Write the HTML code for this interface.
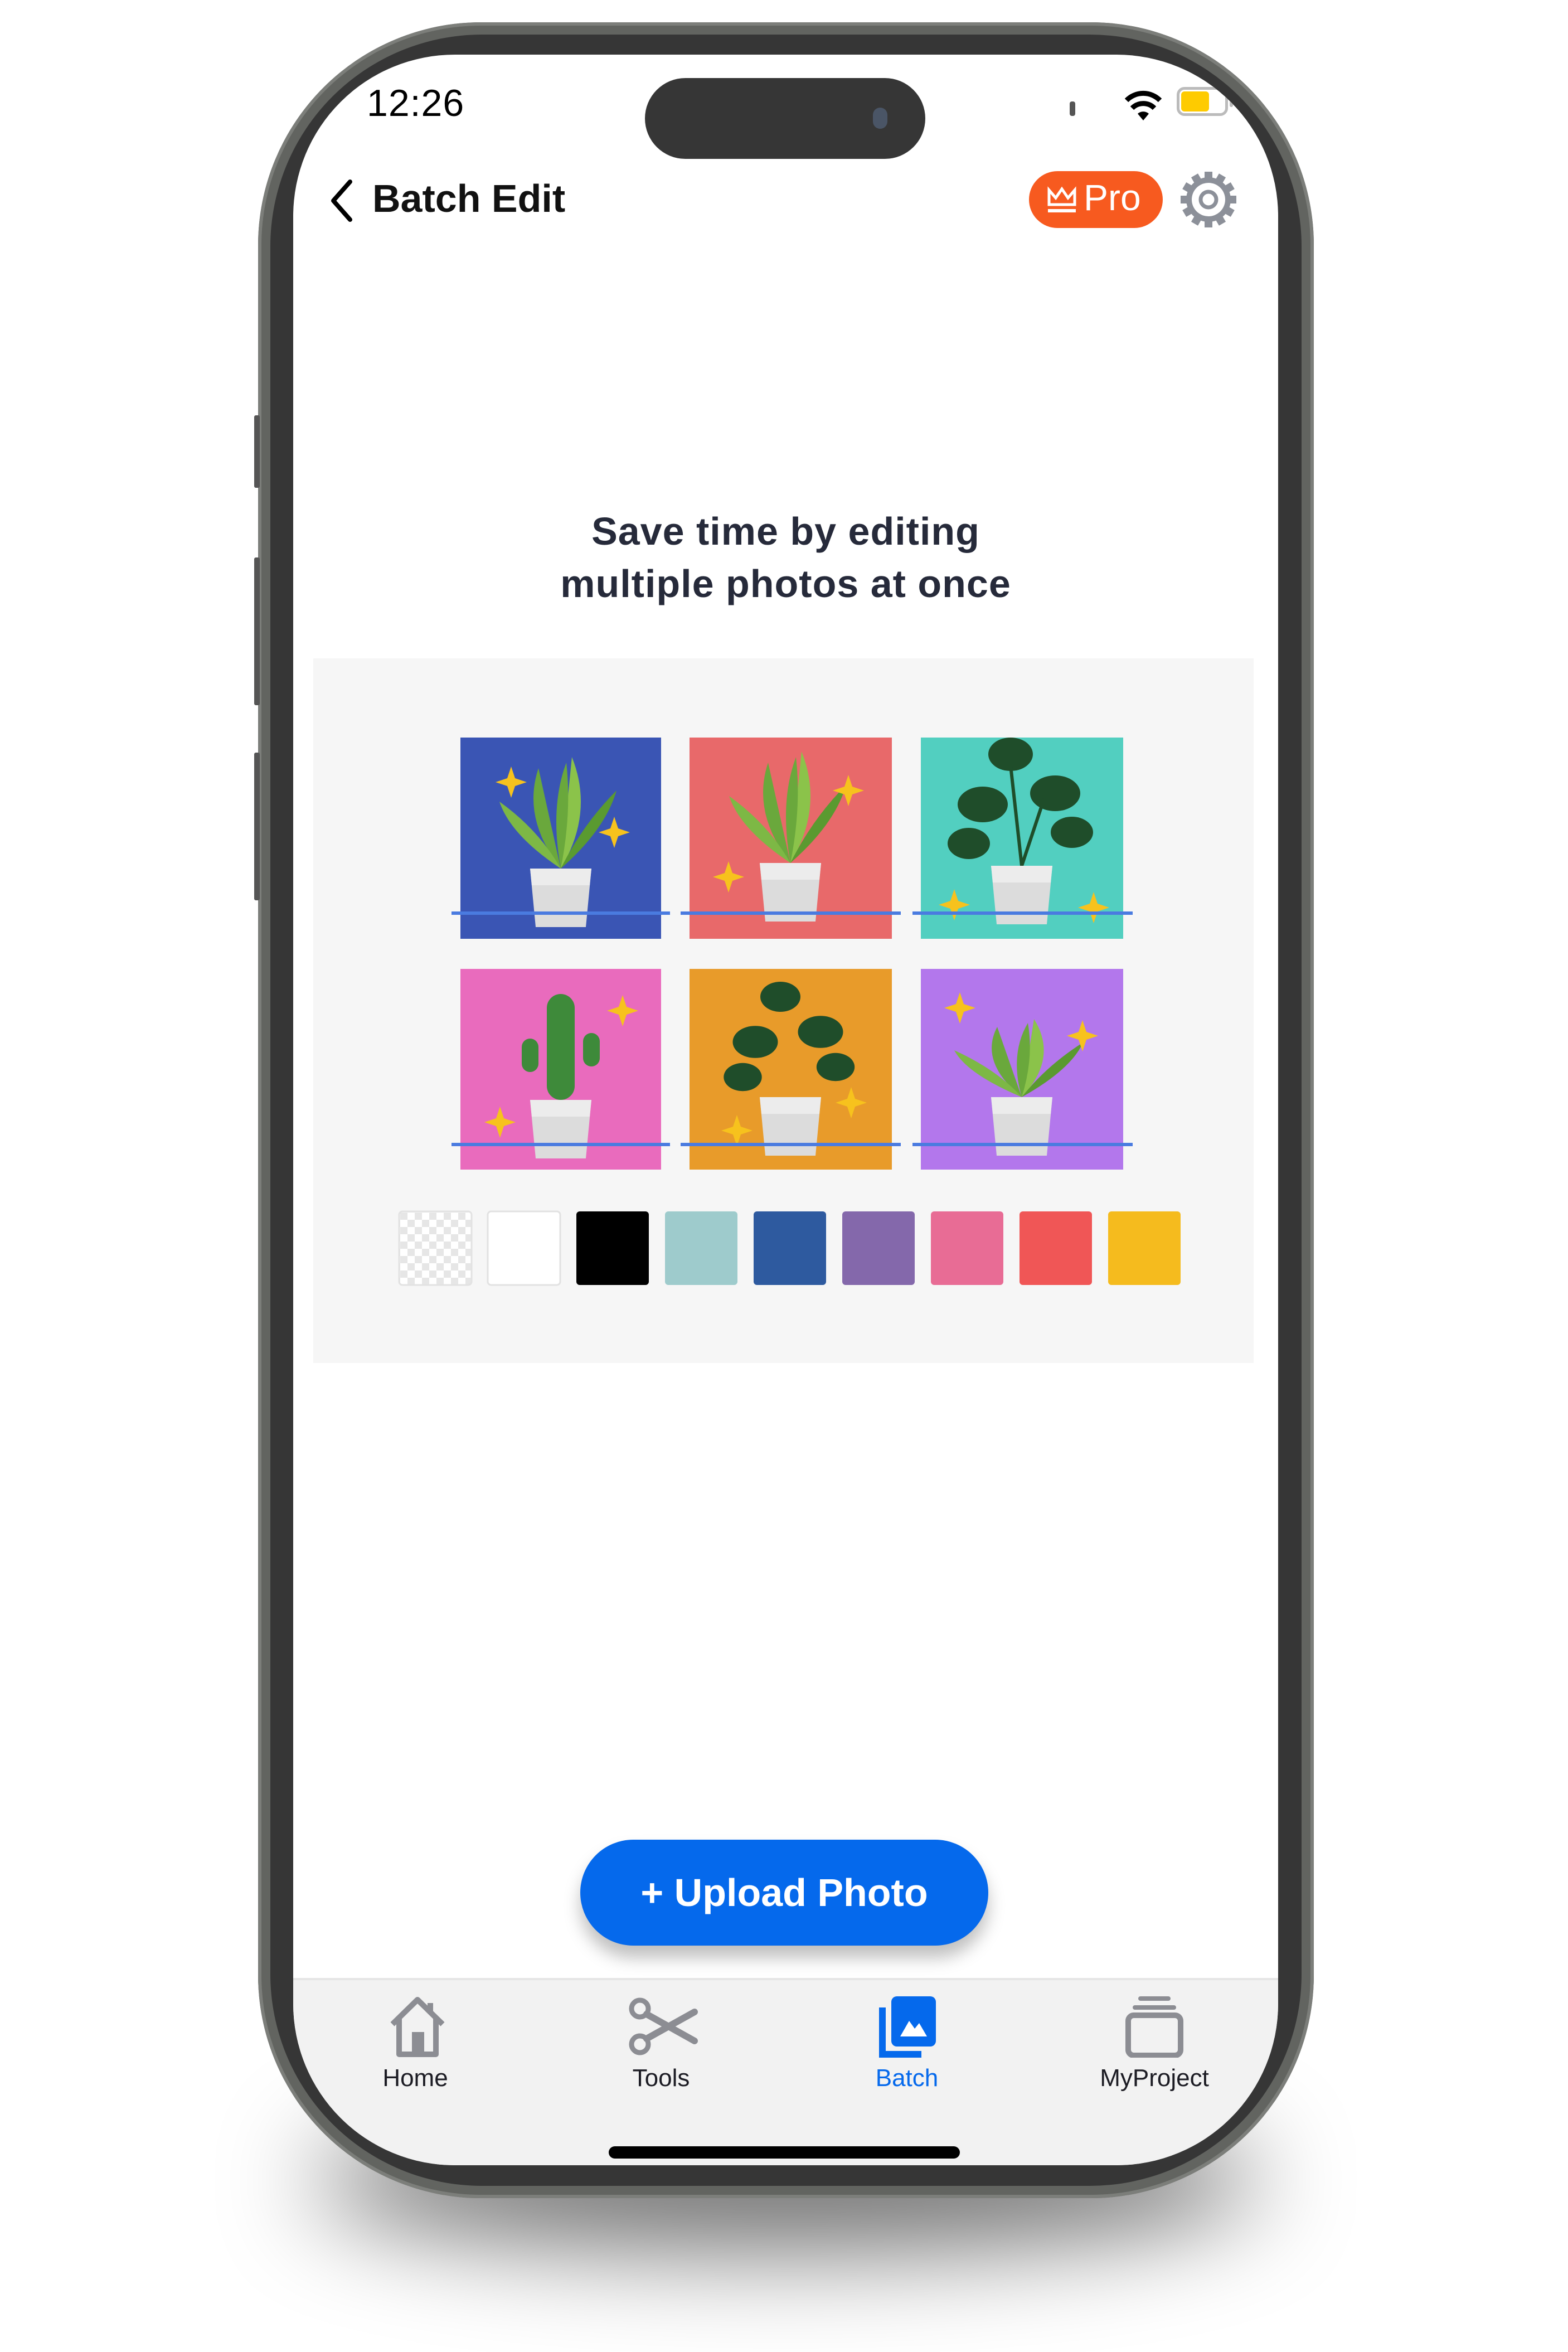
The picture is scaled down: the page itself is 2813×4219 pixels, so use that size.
<!DOCTYPE html>
<html><head><meta charset="utf-8">
<style>
html,body{margin:0;padding:0;background:#fff;}
body{width:2813px;height:4219px;position:relative;overflow:hidden;font-family:"Liberation Sans",sans-serif;}
.shadow{position:absolute;left:560px;top:3780px;width:1700px;height:260px;border-radius:50%;background:rgba(0,0,0,0.55);filter:blur(90px);}
.frame{position:absolute;left:463px;top:40px;width:1894px;height:3903px;border-radius:400px;background:#626460;box-shadow:inset 0 0 0 6px #7c7e7a;}
.side{position:absolute;left:456px;width:10px;background:#555;border-radius:3px;}
.bezel{position:absolute;left:485px;top:62px;width:1850px;height:3859px;border-radius:380px;background:#363636;}
.screen{position:absolute;left:526px;top:98px;width:1767px;height:3786px;border-radius:290px;background:#fff;overflow:hidden;}
.abs{position:absolute;}
</style></head><body>
<div class="shadow"></div>
<div class="frame"></div>
<div class="side" style="top:745px;height:130px"></div>
<div class="side" style="top:1000px;height:265px"></div>
<div class="side" style="top:1350px;height:265px"></div>
<div class="bezel"></div>
<div class="screen">
  <div class="abs" style="left:132px;top:48px;font-size:68px;font-weight:500;color:#000;letter-spacing:1px">12:26</div>
  <div class="abs" style="left:631px;top:42px;width:503px;height:145px;border-radius:73px;background:#363636"></div>
  <div class="abs" style="left:1040px;top:95px;width:26px;height:38px;border-radius:13px;background:#4a5566"></div>
  <div class="abs" style="left:1393px;top:84px;width:10px;height:26px;border-radius:4px;background:#555"></div>
  <svg class="abs" style="left:1490px;top:60px" width="70" height="60" viewBox="0 0 70 60">
    <path d="M35 58 L25 46 A15 15 0 0 1 45 46 Z" fill="#000"/>
    <path d="M15 36 A28 28 0 0 1 55 36" stroke="#000" stroke-width="9" fill="none"/>
    <path d="M5 22 A42 42 0 0 1 65 22" stroke="#000" stroke-width="9" fill="none"/>
  </svg>
  <div class="abs" style="left:1585px;top:58px;width:92px;height:52px;border-radius:14px;border:5px solid #bbb;box-sizing:border-box"></div>
  <div class="abs" style="left:1593px;top:66px;width:50px;height:36px;border-radius:6px;background:#fecb00"></div>
  <div class="abs" style="left:1680px;top:76px;width:6px;height:18px;border-radius:3px;background:#bbb"></div>
  <svg class="abs" style="left:62px;top:222px" width="50" height="80" viewBox="0 0 50 80"><path d="M40 6 L10 40 L40 74" stroke="#000" stroke-width="8" fill="none" stroke-linecap="round" stroke-linejoin="round"/></svg>
  <div class="abs" style="left:142px;top:218px;font-size:70px;font-weight:bold;color:#111">Batch Edit</div>
  <div class="abs" style="left:1320px;top:209px;width:240px;height:102px;border-radius:51px;background:#f75a1f"></div>
  <svg class="abs" style="left:1350px;top:235px" width="58" height="52" viewBox="0 0 58 52"><path d="M6 34 L6 8 L18 22 L29 6 L40 22 L52 8 L52 34 Z" stroke="#fff" stroke-width="5" fill="none"/><rect x="4" y="42" width="50" height="6" fill="#fff"/></svg>
  <div class="abs" style="left:1418px;top:218px;font-size:66px;color:#fff">Pro</div>
  <svg class="abs" style="left:1590px;top:208px" width="104" height="104" viewBox="0 0 104 104">
    <g fill="#8c9099"><circle cx="52" cy="52" r="40"/>
    <g id="t"><rect x="45" y="2" width="14" height="18"/></g>
    <use href="#t" transform="rotate(30 52 52)"/><use href="#t" transform="rotate(60 52 52)"/><use href="#t" transform="rotate(90 52 52)"/><use href="#t" transform="rotate(120 52 52)"/><use href="#t" transform="rotate(150 52 52)"/><use href="#t" transform="rotate(180 52 52)"/><use href="#t" transform="rotate(210 52 52)"/><use href="#t" transform="rotate(240 52 52)"/><use href="#t" transform="rotate(270 52 52)"/><use href="#t" transform="rotate(300 52 52)"/><use href="#t" transform="rotate(330 52 52)"/></g>
    <circle cx="52" cy="52" r="30" fill="#fff"/><circle cx="52" cy="52" r="14" fill="none" stroke="#8c9099" stroke-width="7"/>
  </svg>
  <div class="abs" style="left:0;top:808px;width:1767px;text-align:center;font-size:70px;font-weight:bold;color:#262a3a;line-height:94px;letter-spacing:1px">Save time by editing<br>multiple photos at once</div>
  <div class="abs" style="left:36px;top:1083px;width:1687px;height:1264px;background:#f6f6f6"></div>
  <svg class="abs" style="left:36px;top:1083px" width="1687" height="1264" viewBox="0 0 1687 1264">
    <defs>
      <g id="pot"><path d="M-55 0 L55 0 L45 105 L-45 105 Z" fill="#dcdcdc"/><path d="M-55 0 L55 0 L52 30 L-52 30 Z" fill="#ececec"/></g>
      <g id="leaves" fill="#6aa83c"><path d="M0 0 Q-70 -90 -40 -180 Q-20 -90 0 0Z"/><path d="M0 0 Q60 -100 20 -200 Q10 -100 0 0Z" fill="#8bc34a"/><path d="M0 0 Q-20 -110 10 -190 Q20 -100 0 0Z"/><path d="M0 0 Q80 -70 100 -140 Q40 -80 0 0Z" fill="#5a9a30"/><path d="M0 0 Q-90 -60 -110 -120 Q-40 -70 0 0Z" fill="#7db845"/></g>
      <g id="darkl" fill="#1f4d2a"><ellipse cx="-70" cy="-110" rx="45" ry="32"/><ellipse cx="60" cy="-130" rx="45" ry="32"/><ellipse cx="-20" cy="-200" rx="40" ry="30"/><ellipse cx="90" cy="-60" rx="38" ry="28"/><ellipse cx="-95" cy="-40" rx="38" ry="28"/></g>
      <path id="sp" d="M0 -28 L7 -7 L28 0 L7 7 L0 28 L-7 7 L-28 0 L-7 -7Z" fill="#f7c21d"/>
      <pattern id="ck" width="26" height="26" patternUnits="userSpaceOnUse"><rect width="26" height="26" fill="#fff"/><rect width="13" height="13" fill="#e6e6e6"/><rect x="13" y="13" width="13" height="13" fill="#e6e6e6"/></pattern>
    </defs>
    <g transform="translate(0,-98)">
    <rect x="264" y="240" width="360" height="361" fill="#3a55b4"/>
    <rect x="675" y="240" width="363" height="361" fill="#e8696a"/>
    <rect x="1090" y="240" width="363" height="361" fill="#52cfc0"/>
    <rect x="264" y="655" width="360" height="360" fill="#e96bbd"/>
    <rect x="675" y="655" width="363" height="360" fill="#e89b2a"/>
    <rect x="1090" y="655" width="363" height="360" fill="#b377ec"/>
    <g transform="translate(444,475)"><use href="#leaves"/><use href="#pot"/></g>
    <g transform="translate(856,465)"><use href="#leaves"/><use href="#pot"/></g>
    <g transform="translate(1271,470)"><use href="#darkl"/><path d="M0 0 L-20 -180 M0 0 L40 -120" stroke="#1f4d2a" stroke-width="6"/><use href="#pot"/></g>
    <g transform="translate(444,890)"><rect x="-25" y="-190" width="50" height="190" rx="25" fill="#3e8a3a"/><rect x="-70" y="-110" width="30" height="60" rx="15" fill="#3e8a3a"/><rect x="40" y="-120" width="30" height="60" rx="15" fill="#3e8a3a"/><use href="#pot"/></g>
    <g transform="translate(856,885)"><use href="#darkl" transform="scale(0.9)"/><use href="#pot"/></g>
    <g transform="translate(1271,885)"><use href="#leaves" transform="scale(1.1,0.7)"/><use href="#pot"/></g>
    <use href="#sp" x="355" y="320"/><use href="#sp" x="540" y="410"/>
    <use href="#sp" x="960" y="335"/><use href="#sp" x="745" y="490"/>
    <use href="#sp" x="1150" y="540"/><use href="#sp" x="1400" y="545"/>
    <use href="#sp" x="335" y="930"/><use href="#sp" x="555" y="730"/>
    <use href="#sp" x="965" y="895"/><use href="#sp" x="760" y="945"/>
    <use href="#sp" x="1160" y="725"/><use href="#sp" x="1380" y="775"/>
    <g stroke="#4a7be0" stroke-width="6"><line x1="248" y1="555" x2="640" y2="555"/><line x1="659" y1="555" x2="1054" y2="555"/><line x1="1075" y1="555" x2="1470" y2="555"/><line x1="248" y1="970" x2="640" y2="970"/><line x1="659" y1="970" x2="1054" y2="970"/><line x1="1075" y1="970" x2="1470" y2="970"/></g>
    <rect x="154" y="1090" width="130" height="132" rx="6" fill="url(#ck)" stroke="#e2e2e2" stroke-width="3"/>
    <rect x="313" y="1090" width="130" height="132" rx="6" fill="#fff" stroke="#e2e2e2" stroke-width="3"/>
    <rect x="472" y="1090" width="130" height="132" rx="6" fill="#000"/>
    <rect x="631" y="1090" width="130" height="132" rx="6" fill="#9ecbcc"/>
    <rect x="790" y="1090" width="130" height="132" rx="6" fill="#2e5a9f"/>
    <rect x="949" y="1090" width="130" height="132" rx="6" fill="#8468ab"/>
    <rect x="1108" y="1090" width="130" height="132" rx="6" fill="#e86c95"/>
    <rect x="1267" y="1090" width="130" height="132" rx="6" fill="#f05656"/>
    <rect x="1426" y="1090" width="130" height="132" rx="6" fill="#f5bb1e"/>
    </g>
  </svg>
  <div class="abs" style="left:515px;top:3202px;width:732px;height:190px;border-radius:95px;background:#0569ec;box-shadow:0 22px 30px rgba(0,0,0,0.25);color:#fff;font-size:70px;font-weight:bold;text-align:center;line-height:190px">+ Upload Photo</div>
  <div class="abs" style="left:0;top:3450px;width:1767px;height:400px;background:#f2f2f2;border-top:4px solid #e6e6e6"></div>
  <svg class="abs" style="left:168px;top:3483px" width="110" height="110" viewBox="0 0 110 110"><path d="M10 50 L55 6 L100 50 M22 40 L22 104 L88 104 L88 40 M78 30 L78 12" stroke="#8c8d93" stroke-width="10" fill="none" stroke-linejoin="round"/><rect x="45" y="64" width="22" height="40" fill="#8c8d93"/></svg>
  <svg class="abs" style="left:600px;top:3483px" width="130" height="110" viewBox="0 0 130 110"><circle cx="22" cy="22" r="15" stroke="#8c8d93" stroke-width="9" fill="none"/><circle cx="22" cy="86" r="15" stroke="#8c8d93" stroke-width="9" fill="none"/><path d="M34 32 L120 80 M34 76 L120 28" stroke="#8c8d93" stroke-width="12" stroke-linecap="round"/></svg>
  <svg class="abs" style="left:1047px;top:3483px" width="110" height="110" viewBox="0 0 110 110"><path d="M10 20 L10 104 L80 104" stroke="#0569ec" stroke-width="12" fill="none"/><rect x="26" y="0" width="80" height="90" rx="10" fill="#0569ec"/><path d="M42 72 L58 44 L68 58 L76 48 L90 72 Z" fill="#fff"/></svg>
  <svg class="abs" style="left:1490px;top:3483px" width="110" height="110" viewBox="0 0 110 110"><rect x="8" y="34" width="94" height="72" rx="10" stroke="#8c8d93" stroke-width="10" fill="none"/><rect x="16" y="16" width="78" height="8" rx="4" fill="#8c8d93"/><rect x="26" y="0" width="58" height="8" rx="4" fill="#8c8d93"/></svg>
  <div class="abs" style="left:119px;top:3605px;width:200px;text-align:center;font-size:44px;color:#1c1c24">Home</div>
  <div class="abs" style="left:560px;top:3605px;width:200px;text-align:center;font-size:44px;color:#1c1c24">Tools</div>
  <div class="abs" style="left:1001px;top:3605px;width:200px;text-align:center;font-size:44px;color:#0569ec">Batch</div>
  <div class="abs" style="left:1395px;top:3605px;width:300px;text-align:center;font-size:44px;color:#1c1c24">MyProject</div>
  <div class="abs" style="left:566px;top:3752px;width:630px;height:22px;border-radius:11px;background:#000"></div>
</div>
</body></html>
